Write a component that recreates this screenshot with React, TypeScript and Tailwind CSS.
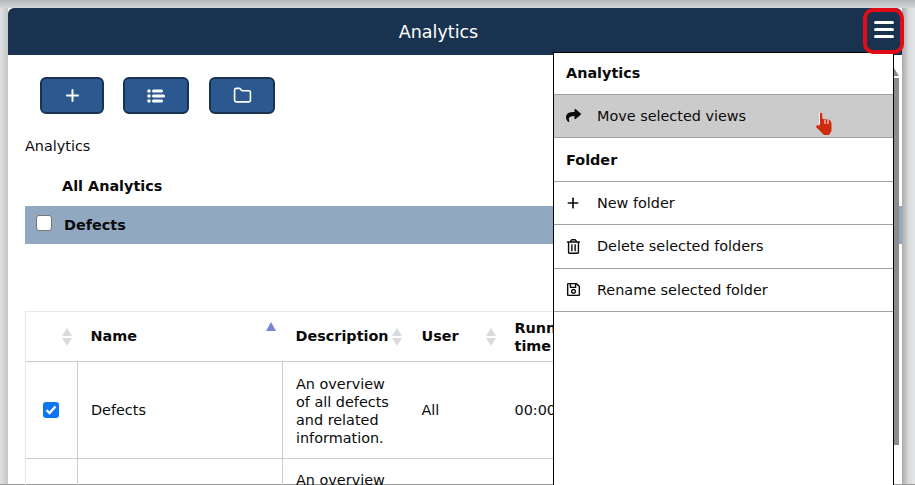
import { Plus, Folder } from 'lucide-react'
import { FaShare, FaRegTrashAlt, FaRegSave } from 'react-icons/fa'

function SortArrows({ active = false }: { active?: boolean }) {
    if (active) {
        return <span className="block w-0 h-0 border-x-[5px] border-x-transparent border-b-[9px] border-b-[#7b83d8]" />
    }
    return (
        <span className="flex flex-col gap-[2px]">
            <span className="w-0 h-0 border-x-[5px] border-x-transparent border-b-[8px] border-b-[#d9dcdf]" />
            <span className="w-0 h-0 border-x-[5px] border-x-transparent border-t-[8px] border-t-[#d9dcdf]" />
        </span>
    )
}

function ListIcon() {
    return (
        <svg width="18" height="16" viewBox="0 0 18 16" fill="white">
            <circle cx="2" cy="3" r="1.8" />
            <circle cx="2" cy="8" r="1.8" />
            <circle cx="2" cy="13" r="1.8" />
            <rect x="5" y="1.5" width="11" height="3" rx="1.5" />
            <rect x="5" y="6.5" width="13" height="3" rx="1.5" />
            <rect x="5" y="11.5" width="11" height="3" rx="1.5" />
        </svg>
    )
}

function ToolButton({ width, children }: { width: string; children: React.ReactNode }) {
    return (
        <button className={`${width} h-[37px] flex items-center justify-center rounded-md bg-[#2b598f] border-2 border-[#1a3450]`}>
            {children}
        </button>
    )
}

function MenuItem({ icon, label, hover = false }: { icon: React.ReactNode; label: string; hover?: boolean }) {
    return (
        <div className={`h-[43.5px] flex items-center border-b border-[#a0a0a0] ${hover ? 'bg-[#cbcbcb] border-t -mt-px' : ''}`}>
            <span className="w-[43px] pl-[12px] flex items-center">{icon}</span>
            <span>{label}</span>
        </div>
    )
}

function HandCursor() {
    return (
        <svg className="absolute left-[261px] top-[60px]" width="18" height="23" viewBox="0 0 18 23">
            <path d="M4.5 0 L7 0 L7.5 6 L15 7 L16.5 10 L16.5 18 L14 22 L9 22 L1 14 L2 12 L4.5 13 Z" fill="#cf2a0e" />
            <path d="M4 0 L5 0 L5 11 L4 11 Z" fill="#ffffff" />
            <path d="M10 7 L10 11 M13 7 L13 11" stroke="#ffffff" strokeWidth="1" />
        </svg>
    )
}

export default function App() {
    return (
        <div className="w-[915px] h-[485px] overflow-hidden flex flex-col text-[14.4px] leading-[18px] text-[#0b0b0b] font-['DejaVu_Sans',sans-serif]">
            <div className="h-[8px] shrink-0 bg-gradient-to-b from-[#b4b6b8] to-[#d4d6d8]" />
            <div className="flex flex-1 min-h-0">
                <div className="w-[8px] bg-gradient-to-r from-[#dfe2e5] to-[#c4c6c8]" />
                <div className="relative w-[894px] bg-white rounded-t-md overflow-visible">
                    <header className="h-[47px] flex items-center justify-center pr-[33px] rounded-t-md bg-[#18324f] text-white text-[17.5px]">
                        Analytics
                    </header>

                    <div className="pl-[17px]">
                        <div className="flex pl-[15px] pt-[22px]">
                            <ToolButton width="w-[64px]"><Plus size={19} color="white" strokeWidth={2.5} /></ToolButton>
                            <span className="ml-[19px]"><ToolButton width="w-[66px]"><ListIcon /></ToolButton></span>
                            <span className="ml-[20px]"><ToolButton width="w-[66px]"><Folder size={19} color="white" strokeWidth={2} /></ToolButton></span>
                        </div>
                        <p className="mt-[23px]">Analytics</p>
                        <p className="mt-[22px] pl-[37px] font-bold">All Analytics</p>
                        <div className="mt-[11px] h-[38px] bg-[#91a8c1] flex items-center pl-[11px] font-bold">
                            <span className="w-[16px] h-[16px] -mt-[4px] bg-white border border-[#767676] rounded-[3px]" />
                            <span className="ml-[12px]">Defects</span>
                        </div>

                        <table className="mt-[67px] w-[860px] table-fixed border-collapse">
                            <colgroup>
                                <col className="w-[52px]" />
                                <col className="w-[205px]" />
                                <col className="w-[127px]" />
                                <col className="w-[92px]" />
                                <col />
                            </colgroup>
                            <thead>
                                <tr className="h-[50px] border-t border-[#e8e8e8] border-b border-b-[#cccccc] font-bold">
                                    <th className="border-l border-[#e8e8e8]"><div className="flex justify-end pr-[6px]"><SortArrows /></div></th>
                                    <th className="text-left pl-[13px]"><div className="flex justify-between items-start pr-[7px]"><span className="-mt-[1px]">Name</span><span className="-mt-[6px]"><SortArrows active /></span></div></th>
                                    <th className="text-left pl-[13px]"><div className="flex items-center gap-[3px]"><span className="-mt-[1px]">Description</span><SortArrows /></div></th>
                                    <th className="text-left pl-[12px]"><div className="flex justify-between items-center pr-[6px]"><span className="-mt-[1px]">User</span><SortArrows /></div></th>
                                    <th className="text-left pl-[13px]">Runn<br />time</th>
                                </tr>
                            </thead>
                            <tbody>
                                <tr className="h-[97px] border-b border-[#cccccc]">
                                    <td className="border-l border-[#e8e8e8] border-r border-r-[#cccccc]">
                                        <span className="ml-[17px] w-[16px] h-[16px] flex items-center justify-center rounded-[3px] bg-[#0f76f2]">
                                            <svg width="12" height="10" viewBox="0 0 12 10"><path d="M1.5 5 L4.5 8 L10.5 1.5" fill="none" stroke="white" strokeWidth="2.4" /></svg>
                                        </span>
                                    </td>
                                    <td className="pl-[13px] border-r border-[#cccccc]">Defects</td>
                                    <td className="pl-[13px] pr-[8px] pt-[2px]">An overview of all defects and related information.</td>
                                    <td className="pl-[12px]">All</td>
                                    <td className="pl-[13px]">00:00</td>
                                </tr>
                                <tr>
                                    <td className="border-l border-[#e8e8e8] border-r border-r-[#cccccc]" />
                                    <td className="border-r border-[#cccccc]" />
                                    <td className="pl-[13px] pt-[12px] align-top">An overview</td>
                                    <td />
                                    <td />
                                </tr>
                            </tbody>
                        </table>
                    </div>

                    <aside className="absolute right-[8px] top-[44px] w-[341px] h-[440px] bg-white border border-black text-[#0b0b0b] z-10">
                        <div className="h-[42px] flex items-center pl-[12px] pb-[2px] font-bold border-b border-[#a0a0a0]">Analytics</div>
                        <MenuItem icon={<FaShare size={15} />} label="Move selected views" hover />
                        <div className="h-[44px] flex items-center pl-[12px] pt-[2px] font-bold border-b border-[#a0a0a0]">Folder</div>
                        <MenuItem icon={<Plus size={16} strokeWidth={2.5} className="-ml-px" />} label="New folder" />
                        <MenuItem icon={<FaRegTrashAlt size={15} />} label="Delete selected folders" />
                        <MenuItem icon={<FaRegSave size={15} />} label="Rename selected folder" />
                        <HandCursor />
                    </aside>

                    {/* page scrollbar showing behind the menu */}
                    <span className="absolute left-[886px] top-[60px] w-0 h-0 border-r-[5px] border-r-transparent border-b-[8px] border-b-[#8c8c8c]" />
                    <div className="absolute left-[886px] top-[70px] h-[367px] w-[5px] bg-[#8c8c8c]" />

                    <button className="absolute left-[855px] top-0 w-[41px] h-[46px] flex flex-col items-center justify-center gap-[4px] pb-[3px] rounded-[10px] bg-[#18324f] border-[4px] border-[#e00d17] z-20">
                        <span className="w-[20px] h-[3px] rounded bg-white" />
                        <span className="w-[20px] h-[3px] rounded bg-white" />
                        <span className="w-[20px] h-[3px] rounded bg-white" />
                    </button>
                </div>
                <div className="w-[13px] bg-gradient-to-r from-[#a8aaac] via-[#d8dadc] to-[#e4e6e8]" />
            </div>
            <div className="h-[1px] shrink-0 bg-[#9a9a9a]" />
        </div>
    )
}
